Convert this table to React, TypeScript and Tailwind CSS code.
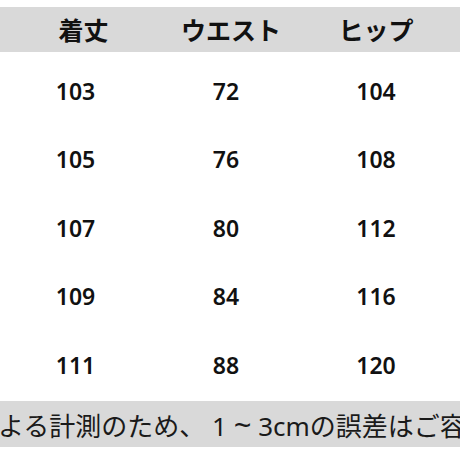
const rows = [
  ['103', '72', '104'],
  ['105', '76', '108'],
  ['107', '80', '112'],
  ['109', '84', '116'],
  ['111', '88', '120'],
];

export default function App() {
  return (
    <div className="w-[460px] h-[460px] overflow-hidden bg-white text-[#111] font-['Noto_Sans','Noto_Sans_CJK_JP',sans-serif]">
      <div className="h-[7px]" />
      {/* header */}
      <div className="h-[45px] bg-[#d9d9d9] grid grid-cols-[151px_150px_150px] items-center text-[25px] font-bold leading-none font-['Noto_Sans_CJK_JP',sans-serif]">
        <div className="text-center pl-[16px]">着丈</div>
        <div className="text-center pl-[10px]">ウエスト</div>
        <div className="text-center">ヒップ</div>
      </div>
      <div className="h-[5px]" />
      {/* rows */}
      {rows.map((r) => (
        <div key={r[0]} className="h-[68.5px] grid grid-cols-[151px_150px_150px] items-center text-[23px] font-semibold leading-none">
          {r.map((v, i) => (
            <div key={i} className="text-center">{v}</div>
          ))}
        </div>
      ))}
      <div className="h-[1.5px]" />
      {/* footnote */}
      <div className="h-[46px] bg-[#d9d9d9] flex items-center overflow-hidden">
        <span className="whitespace-nowrap text-[26px] leading-none text-[#1a1a1a] -ml-[2px]">
          <span className="font-['Noto_Sans_CJK_JP',sans-serif]">よる計測のため、</span> 1 <span className="text-[31px]">~</span> 3cm<span className="font-['Noto_Sans_CJK_JP',sans-serif]">の誤差はご容赦ください</span>
        </span>
      </div>
    </div>
  );
}
